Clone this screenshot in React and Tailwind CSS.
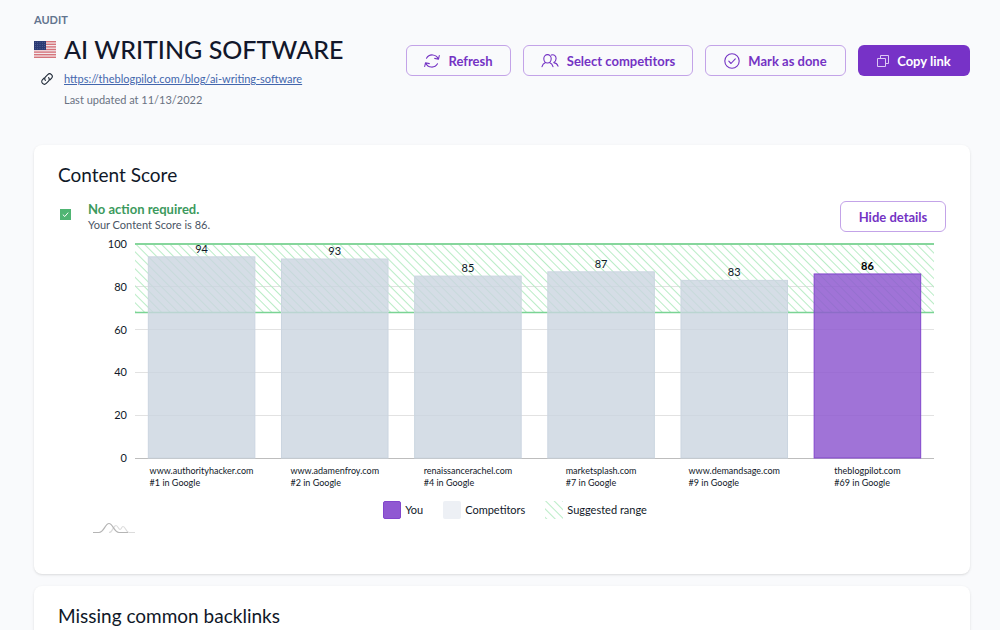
import { useState } from "react";

const results = [
  { site: "www.authorityhacker.com", rank: 1, score: 94 },
  { site: "www.adamenfroy.com", rank: 2, score: 93 },
  { site: "renaissancerachel.com", rank: 4, score: 85 },
  { site: "marketsplash.com", rank: 7, score: 87 },
  { site: "www.demandsage.com", rank: 9, score: 83 },
  { site: "theblogpilot.com", rank: 69, score: 86, own: true },
];

const ticks = [100, 80, 60, 40, 20, 0];
const PLOT_HEIGHT = 214;
const RANGE_MIN = 68;

const yFor = (value) => PLOT_HEIGHT - (value / 100) * PLOT_HEIGHT;

function FlagIcon() {
  return (
    <svg className="h-[17px] w-[22px] shrink-0" viewBox="0 0 22 17" aria-hidden="true">
      <rect width="22" height="17" rx="1" fill="#f3e9ec" />
      {[0, 1, 2, 3, 4, 5, 6].map((i) => (
        <rect key={i} y={i * 2.6} width="22" height="1.4" fill="#d5747c" />
      ))}
      <rect width="12" height="9" fill="#2b3a74" />
      {[0, 1, 2, 3].map((row) =>
        [0, 1, 2, 3, 4].map((col) => (
          <circle key={`${row}-${col}`} cx={1.4 + col * 2.3} cy={1.2 + row * 2.2} r="0.4" fill="#8b95bd" />
        ))
      )}
    </svg>
  );
}

function LinkIcon() {
  return (
    <svg className="size-3 shrink-0" viewBox="0 0 24 24" fill="none" stroke="#1f2937" strokeWidth="2.2" strokeLinecap="round" strokeLinejoin="round" aria-hidden="true">
      <path d="M8.800 14.700a5.400 5.400 0 0 1 .2-7l4.500-4.500a5.200 5.200 0 0 1 7.400 7.400l-3.400 3.400" />
      <path d="M15.200 9.300a5.400 5.400 0 0 1-.2 7l-4.500 4.500a5.200 5.200 0 0 1-7.400-7.400l3.400-3.400" />
    </svg>
  );
}

function RefreshIcon() {
  return (
    <svg className="size-4" viewBox="0 0 16 16" fill="none" stroke="currentColor" strokeWidth="1.1" strokeLinecap="round" strokeLinejoin="round" aria-hidden="true">
      <path d="M2.500 5.200A6.600 6.600 0 0 1 14.300 6M15.300 2.500l-.8 3.700-3.800-.8" />
      <path d="M13.500 10.800A6.600 6.600 0 0 1 1.700 10M.7 13.500l.8-3.700 3.800.8" />
    </svg>
  );
}

function PeopleIcon() {
  return (
    <svg className="h-4 w-[18px]" viewBox="0 0 18 16" fill="none" stroke="currentColor" strokeWidth="1.1" strokeLinecap="round" strokeLinejoin="round" aria-hidden="true">
      <ellipse cx="6.500" cy="5.800" rx="3.700" ry="4.200" />
      <path d="M1 13.700c.5-2.300 1.900-3.600 3.500-4.200M8.500 9.500c1.600.6 3 1.900 3.500 4.200M10.300 2.100c2.600-1.200 4.800.8 4.800 3.500 0 1.800-1 3.300-2.300 4 2 .3 3.600 1.400 4.200 3.500" />
    </svg>
  );
}

function CheckCircleIcon() {
  return (
    <svg className="size-4" viewBox="0 0 16 16" fill="none" stroke="currentColor" strokeWidth="1.1" strokeLinecap="round" strokeLinejoin="round" aria-hidden="true">
      <circle cx="8" cy="8" r="7.200" />
      <path d="m4.800 8.200 2.200 2.300 4.300-4.700" />
    </svg>
  );
}

function CopyIcon() {
  return (
    <svg className="size-3" viewBox="0 0 12 12" fill="none" stroke="#dcc8f4" strokeWidth="1" strokeLinejoin="round" aria-hidden="true">
      <path d="M.5 3.500h8v8h-8zM3.500 3.500v-3h8v8h-3" />
    </svg>
  );
}

function ChartMark() {
  return (
    <svg className="h-3 w-[42px]" viewBox="0 0 42 12" fill="none" aria-hidden="true">
      <path d="M16 10.500c4 0 4-7 7-7 2 0 2.500 4 4 4s1.500-3 3-3c2.500 0 3 6 6 6h6" stroke="#dcdcdc" strokeWidth="1.200" />
      <path d="M0 10.500h6c5 0 6-9 10-9s5 9 10 9h9" stroke="#b5b5b5" strokeWidth="1.200" />
    </svg>
  );
}

function OutlineButton({ className = "", children, ...props }) {
  return (
    <button
      type="button"
      className={`flex h-[31px] items-center justify-center gap-2 whitespace-nowrap rounded-md border border-[#c3a3e8] text-[13px] leading-4 font-bold text-[#7433c4] ${className}`}
      {...props}
    >
      {children}
    </button>
  );
}

function Hatch({ id }) {
  return (
    <pattern id={id} width="6" height="6" patternUnits="userSpaceOnUse" patternTransform="rotate(-45)">
      <path d="M.5 0v6" stroke="#b9ecc6" strokeWidth="1" />
    </pattern>
  );
}

function ScoreChart() {
  const slot = 100 / results.length;
  const barWidth = slot * 0.8;

  return (
    <figure className="pr-3 pl-10">
      <div className="flex items-start">
        <div className="-mt-2 flex h-[230px] w-[29px] shrink-0 flex-col justify-between text-right text-[11px] leading-4 text-gray-900">
          {ticks.map((tick) => (
            <span key={tick}>{tick}</span>
          ))}
        </div>
        <div className="ml-2 min-w-0 flex-1">
          <svg className="block h-[214px] w-full overflow-visible" role="img" aria-label="Content Score">
            <defs>
              <Hatch id="range-hatch" />
            </defs>
            {ticks.map((tick) => (
              <line key={tick} x1="0" x2="100%" y1={Math.floor(yFor(tick)) + 0.5} y2={Math.floor(yFor(tick)) + 0.5} stroke={tick ? "#e2e2e2" : "#bdbdbd"} />
            ))}
            <rect width="100%" height={yFor(RANGE_MIN)} fill="url(#range-hatch)" />
            <line x1="0" x2="100%" y1="0" y2="0" stroke="#86d69c" strokeWidth="2" />
            <line x1="0" x2="100%" y1={yFor(RANGE_MIN)} y2={yFor(RANGE_MIN)} stroke="#7ad494" strokeWidth="1.5" />
            {results.map((item, i) => (
              <g key={item.site}>
                <rect
                  x={`${slot * i + (slot - barWidth) / 2}%`}
                  y={yFor(item.score)}
                  width={`${barWidth}%`}
                  height={PLOT_HEIGHT - yFor(item.score)}
                  fill={item.own ? "#8f5bd0" : "#cbd5e0"}
                  fillOpacity={item.own ? 0.85 : 0.8}
                  stroke={item.own ? "#8246cc" : "#cbd5e0"}
                />
                <text
                  x={`${slot * (i + 0.5)}%`}
                  y={yFor(item.score) - 4}
                  textAnchor="middle"
                  className={item.own ? "fill-black text-[11px] font-bold" : "fill-gray-900 text-[11px]"}
                >
                  {item.score}
                </text>
              </g>
            ))}
          </svg>
          <div className="mt-[7px] grid grid-cols-6 text-[9px] leading-3 text-gray-900">
            {results.map((item) => (
              <div key={item.site} className="flex justify-center whitespace-nowrap">
                <p>
                  {item.site}
                  <br />#{item.rank} in Google
                </p>
              </div>
            ))}
          </div>
        </div>
      </div>
    </figure>
  );
}

function Legend() {
  return (
    <ul className="mt-3 flex items-center justify-center gap-5 pl-[26px] text-[11px] leading-[18px] text-gray-900">
      <li className="flex gap-1">
        <span className="size-[18px] rounded-xs border border-[#8246cc] bg-[#9059d2]" />
        You
      </li>
      <li className="flex gap-1">
        <span className="size-[18px] rounded-xs bg-[#edf0f5]" />
        Competitors
      </li>
      <li className="flex gap-1">
        <svg className="size-[18px]" aria-hidden="true">
          <defs>
            <Hatch id="legend-hatch" />
          </defs>
          <rect width="18" height="18" fill="url(#legend-hatch)" />
        </svg>
        Suggested range
      </li>
    </ul>
  );
}

export default function App() {
  const [showDetails, setShowDetails] = useState(true);

  return (
    <div className="min-h-screen bg-[#f9fafc] pt-3 pr-[30px] pl-[34px] font-['Lato','Open_Sans',sans-serif] text-gray-900">
      <header className="flex items-start justify-between">
        <div>
          <p className="text-[11px] leading-4 font-bold text-slate-500">AUDIT</p>
          <div className="mt-1 flex items-center gap-2">
            <FlagIcon />
            <h1 className="text-[25px] leading-[34px] font-medium whitespace-nowrap text-[#12172b]">AI WRITING SOFTWARE</h1>
          </div>
          <div className="mt-[5px] flex items-center gap-[11px] pl-[7px]">
            <LinkIcon />
            <a href="https://theblogpilot.com/blog/ai-writing-software" className="text-[11px] leading-4 text-[#4366ad] underline">
              https://theblogpilot.com/blog/ai-writing-software
            </a>
          </div>
          <p className="mt-[5px] pl-[30px] text-[11px] leading-4 text-gray-500">Last updated at 11/13/2022</p>
        </div>
        <div className="mt-[33px] flex gap-3">
          <OutlineButton className="w-[105px]">
            <RefreshIcon />
            Refresh
          </OutlineButton>
          <OutlineButton className="w-[170px]">
            <PeopleIcon />
            Select competitors
          </OutlineButton>
          <OutlineButton className="w-[141px]">
            <CheckCircleIcon />
            Mark as done
          </OutlineButton>
          <button type="button" className="flex h-[31px] w-28 items-center justify-center gap-2 rounded-md bg-[#7732c7] text-[13px] leading-4 font-bold text-white">
            <CopyIcon />
            Copy link
          </button>
        </div>
      </header>

      <main className="mt-[37px] flex flex-col gap-3">
        <section className="rounded-lg bg-white px-6 pt-[18px] pb-10 shadow-sm">
          <h2 className="text-[19px] leading-6">Content Score</h2>
          <div className="mt-[14px] flex items-start justify-between">
            <div className="flex items-start gap-[17px]">
              <svg className="mt-2 ml-[2px] size-[11px]" viewBox="0 0 11 11" fill="none" aria-hidden="true">
                <rect width="11" height="11" fill="#4fb573" />
                <path d="m2.800 5.600 2 1.900 3.400-3.900" stroke="#fff" />
              </svg>
              <div>
                <p className="text-[13px] leading-4 font-bold text-[#3c9a5d]">No action required.</p>
                <p className="text-[11px] leading-4 text-gray-600">Your Content Score is 86.</p>
              </div>
            </div>
            <OutlineButton className="w-[106px]" aria-expanded={showDetails} onClick={() => setShowDetails(!showDetails)}>
              {showDetails ? "Hide details" : "Show details"}
            </OutlineButton>
          </div>
          {showDetails && (
            <div className="mt-[11px]">
              <ScoreChart />
              <Legend />
              <div className="mt-[3px] ml-[35px]">
                <ChartMark />
              </div>
            </div>
          )}
        </section>

        <section className="rounded-lg bg-white px-6 py-[18px] shadow-sm">
          <h2 className="text-[19px] leading-6">Missing common backlinks</h2>
        </section>
      </main>
    </div>
  );
}
